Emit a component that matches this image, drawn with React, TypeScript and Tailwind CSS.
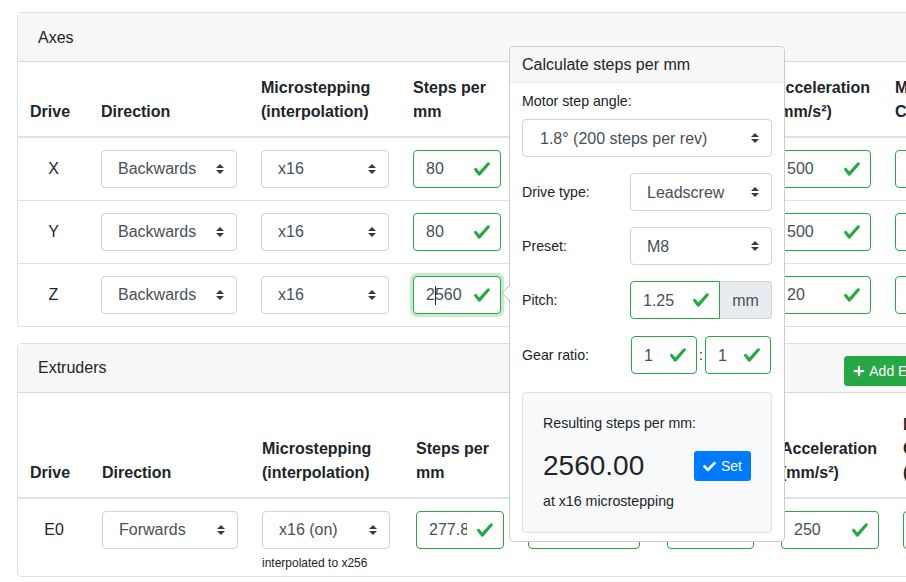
import { FaCheck, FaPlus } from 'react-icons/fa';

const Check = () => (
  <svg viewBox="0 0 8 8" className="absolute right-[9px] top-1/2 h-[18px] w-[18px] -translate-y-1/2">
    <path
      fill="#28a745"
      d="M2.3 6.73L.6 4.53c-.4-1.04.46-1.4 1.1-.8l1.1 1.4 3.4-3.8c.6-.63 1.6-.27 1.2.7l-4 4.6c-.43.5-.8.4-1.1.1z"
    />
  </svg>
);

function ValidInput({
  value,
  focused = false,
  caretAt,
  className = '',
}: {
  value: string;
  focused?: boolean;
  caretAt?: number;
  className?: string;
}) {
  return (
    <div
      className={`relative flex h-[38px] items-center rounded-[4px] border border-[#28a745] bg-white pl-3 pr-[36px] text-[16px] text-[#495057] ${
        focused ? 'shadow-[0_0_0_3.2px_rgba(40,167,69,0.25)]' : ''
      } ${className}`}
    >
      <span className="overflow-hidden whitespace-nowrap">
        {caretAt !== undefined ? (
          <>
            {value.slice(0, caretAt)}
            <span className="-mr-px inline-block h-[19px] w-px bg-[#212529] align-middle" />
            {value.slice(caretAt)}
          </>
        ) : (
          value
        )}
      </span>
      <Check />
    </div>
  );
}

function Select({ value, className = '' }: { value: string; className?: string }) {
  return (
    <div
      className={`relative flex h-[38px] items-center rounded-[4px] border border-[#ced4da] bg-white pl-4 pr-8 text-[16px] text-[#495057] ${className}`}
    >
      <span className="whitespace-nowrap">{value}</span>
      <svg viewBox="0 0 4 5" className="absolute right-3 top-1/2 h-[10px] w-2 -translate-y-1/2">
        <path fill="#343a40" d="M2 0L0 2h4zm0 5L0 3h4z" />
      </svg>
    </div>
  );
}

const th = 'border-b-2 border-[#dee2e6] px-3 pb-3 text-left align-bottom font-bold leading-6';
const td = 'border-t border-[#dee2e6] px-3 py-3 align-middle';

const axes = [
  { drive: 'X', steps: '80', jerk: '15', speed: '100', accel: '500', current: '800' },
  { drive: 'Y', steps: '80', jerk: '15', speed: '100', accel: '500', current: '800' },
  { drive: 'Z', steps: '2560', jerk: '0.2', speed: '3', accel: '20', current: '800' },
];

function AxesCard() {
  return (
    <div className="w-[964px] rounded-[4px] border border-black/[0.125]">
      <div className="border-b border-black/[0.125] bg-[#f7f7f7] px-5 pt-[12.5px] pb-[11.5px] leading-6">Axes</div>
      <table className="w-full table-fixed">
        <colgroup>
          <col className="w-[71px]" />
          <col className="w-[160px]" />
          <col className="w-[152px]" />
          <col className="w-[112px]" />
          <col className="w-[125px]" />
          <col className="w-[124px]" />
          <col className="w-[121px]" />
          <col />
        </colgroup>
        <thead>
          <tr className="h-[75px]">
            <th className={th}>Drive</th>
            <th className={th}>Direction</th>
            <th className={th}>
              Microstepping
              <br />
              (interpolation)
            </th>
            <th className={th}>Steps per mm</th>
            <th className={th}>Jerk (mm/s)</th>
            <th className={th}>Max. speed (mm/s)</th>
            <th className={`${th} whitespace-nowrap`}>
              Acceleration
              <br />
              (mm/s²)
            </th>
            <th className={`${th} whitespace-nowrap`}>
              Motor
              <br />
              Current (mA)
            </th>
          </tr>
        </thead>
        <tbody>
          {axes.map((a) => (
            <tr key={a.drive}>
              <td className={`${td} text-center`}>{a.drive}</td>
              <td className={td}>
                <Select value="Backwards" />
              </td>
              <td className={td}>
                <Select value="x16" />
              </td>
              <td className={td}>
                {a.drive === 'Z' ? (
                  <ValidInput value={a.steps} focused caretAt={1} />
                ) : (
                  <ValidInput value={a.steps} />
                )}
              </td>
              <td className={td}>
                <ValidInput value={a.jerk} />
              </td>
              <td className={td}>
                <ValidInput value={a.speed} />
              </td>
              <td className={td}>
                <ValidInput value={a.accel} />
              </td>
              <td className={td}>
                <ValidInput value={a.current} />
              </td>
            </tr>
          ))}
        </tbody>
      </table>
    </div>
  );
}

// E0 row cells sit at the top so the hint text can hang below the select
const tdTop = 'border-t border-[#dee2e6] px-3 pt-3 pb-[5px] align-top';

function ExtrudersCard() {
  return (
    <div className="mt-4 w-[964px] rounded-[4px] border border-black/[0.125]">
      <div className="flex justify-between border-b border-black/[0.125] bg-[#f7f7f7] px-5 py-3 leading-6">
        <span>Extruders</span>
        <div className="h-6">
          <button className="flex h-[30px] items-center gap-1 rounded-[3px] border border-[#28a745] bg-[#28a745] px-2 text-[14px] leading-[21px] text-white">
            <FaPlus className="h-3 w-3" />
            Add Extruder
          </button>
        </div>
      </div>
      <table className="w-full table-fixed">
        <colgroup>
          <col className="w-[72px]" />
          <col className="w-[160px]" />
          <col className="w-[152px]" />
          <col className="w-[114px]" />
          <col className="w-[136px]" />
          <col className="w-[117px]" />
          <col className="w-[122px]" />
          <col />
        </colgroup>
        <thead>
          <tr className="h-[105px]">
            <th className={th}>Drive</th>
            <th className={th}>Direction</th>
            <th className={th}>
              Microstepping
              <br />
              (interpolation)
            </th>
            <th className={`${th} !pl-[14px]`}>Steps per mm</th>
            <th className={th}>Instantaneous speed change (mm/s)</th>
            <th className={`${th} !px-[15px]`}>Max. speed (mm/s)</th>
            <th className={`${th} whitespace-nowrap`}>
              Acceleration
              <br />
              (mm/s²)
            </th>
            <th className={th}>
              Motor
              <br />
              Current
              <br />
              (mA)
            </th>
          </tr>
        </thead>
        <tbody>
          <tr className="h-[78px]">
            <td className={`${tdTop} text-center leading-[38px]`}>E0</td>
            <td className={tdTop}>
              <Select value="Forwards" />
            </td>
            <td className={tdTop}>
              <Select value="x16 (on)" />
              <div className="mt-[6px] whitespace-nowrap text-[12px] leading-4">interpolated to x256</div>
            </td>
            <td className={`${tdTop} !pl-[14px]`}>
              <ValidInput value="277.8" />
            </td>
            <td className={tdTop}>
              <ValidInput value="40" />
            </td>
            <td className={`${tdTop} !px-[15px]`}>
              <ValidInput value="100" />
            </td>
            <td className={tdTop}>
              <ValidInput value="250" />
            </td>
            <td className={tdTop}>
              <ValidInput value="800" />
            </td>
          </tr>
        </tbody>
      </table>
    </div>
  );
}

function StepsPopover() {
  return (
    <div className="absolute left-[509px] top-[46px] w-[276px] rounded-[5px] border border-black/20 bg-white text-[14px] leading-[21px]">
      <svg width="9" height="16" viewBox="0 0 9 16" className="absolute left-[-9px] top-[238px]">
        <path d="M9 0 L1 8 L9 16 Z" fill="white" />
        <path d="M9 0 L1 8 L9 16" fill="none" stroke="rgba(0,0,0,0.25)" strokeWidth="1" />
      </svg>
      <div className="rounded-t-[5px] border-b border-[#ebebeb] bg-[#f7f7f7] px-3 pt-[7.5px] pb-[8.5px] text-[16px] leading-[19px]">
        Calculate steps per mm
      </div>
      <div className="px-3 py-2">
        <div className="mb-[7px] text-[14.2px]">Motor step angle:</div>
        <Select value="1.8° (200 steps per rev)" className="!pl-[17px]" />

        <div className="mt-4 flex items-center text-[14.2px]">
          <span className="w-[108px]">Drive type:</span>
          <Select value="Leadscrew" className="flex-1" />
        </div>
        <div className="mt-4 flex items-center text-[14.2px]">
          <span className="w-[108px]">Preset:</span>
          <Select value="M8" className="flex-1" />
        </div>
        <div className="mt-4 flex items-center text-[14.2px]">
          <span className="w-[108px]">Pitch:</span>
          <div className="flex flex-1">
            <ValidInput value="1.25" className="w-[90px] rounded-r-none" />
            <div className="flex h-[38px] flex-1 items-center justify-center rounded-r-[4px] border border-l-0 border-[#ced4da] bg-[#e9ecef] text-[16px] text-[#495057]">
              mm
            </div>
          </div>
        </div>
        <div className="mt-[17px] flex items-center text-[14.2px]">
          <span className="w-[109px]">Gear ratio:</span>
          <ValidInput value="1" className="w-[66px]" />
          <span className="w-2 text-center">:</span>
          <ValidInput value="1" className="w-[66px]" />
        </div>

        <div className="mt-[18px] rounded-[4px] border border-[#dee2e6] bg-[#f8f9fa] p-5 text-[14.2px]">
          <div>Resulting steps per mm:</div>
          <div className="mt-[15px] flex items-center justify-between">
            <span className="text-[28px] leading-[34px]">2560.00</span>
            <button className="flex h-[30px] w-[57px] items-center justify-center gap-[5px] rounded-[3px] bg-[#007bff] text-[14px] text-white">
              <FaCheck className="h-[13px] w-[13px]" />
              Set
            </button>
          </div>
          <div className="mt-[8px]">at x16 microstepping</div>
        </div>
      </div>
    </div>
  );
}

export default function App() {
  return (
    <div className="relative h-[582px] w-[906px] overflow-hidden bg-white font-['Liberation_Sans',Arial,sans-serif] text-[16px] leading-6 text-[#212529]">
      <div className="pl-[17px] pt-3">
        <AxesCard />
        <ExtrudersCard />
      </div>
      <StepsPopover />
    </div>
  );
}
